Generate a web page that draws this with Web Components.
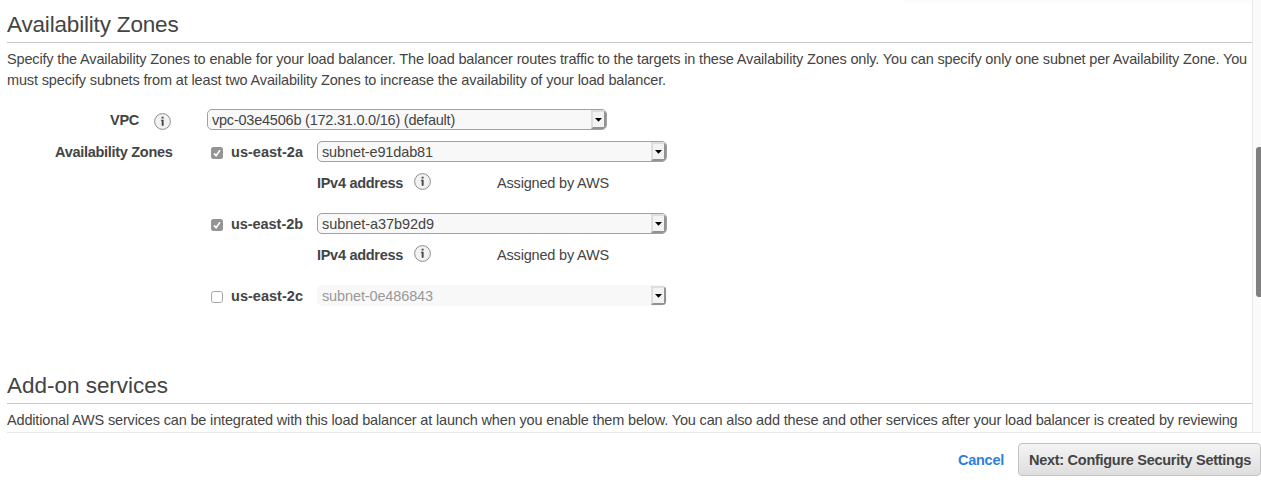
<!DOCTYPE html>
<html lang="en">
<head>
<meta charset="utf-8">
<title>Configure Load Balancer</title>
<style>
html,body{margin:0;height:100%;overflow:hidden;background:#fff}
body{font:14.5px/21px "Liberation Sans",Arial,sans-serif;color:#444}
</style>
</head>
<body>
<wizard-page></wizard-page>
<script>
function define(name, html, setup) {
  customElements.define(name, class extends HTMLElement {
    connectedCallback() {
      if (this.shadowRoot) return;
      const t = document.createElement('template');
      t.innerHTML = html;
      this.attachShadow({ mode: 'open' }).appendChild(t.content.cloneNode(true));
      if (setup) setup(this);
    }
  });
}

// One line of text tracked to an exact measure given by its w attribute.
define('fit-text', `<style>:host{display:block;white-space:nowrap;width:max-content;flex:none}</style><slot></slot>`, el => {
  const natural = el.getBoundingClientRect().width;
  el.style.letterSpacing = ((+el.getAttribute('w') - natural) / el.textContent.length).toFixed(4) + 'px';
});

define('info-icon', `<style>:host{display:block;width:17px;height:17px;flex:none}svg{display:block}</style>
<svg width="17" height="17" viewBox="0 0 17 17"><circle cx="8.5" cy="8.5" r="7.9" fill="#f2f2f2" stroke="#8c8c8c"/>
<path d="M7.6 3.8h2v1.8h-2zM6.9 6.8h2.7v6H7.7V7.7h-.8z" fill="#444"/></svg>`);

define('check-box', `<style>:host{display:block;width:12px;height:12px;flex:none}svg{display:block}
.on{display:none}:host([checked]) .on{display:block}:host([checked]) .off{display:none}</style>
<svg class="on" width="12" height="12" viewBox="0 0 12 12"><rect width="12" height="12" rx="2.5" fill="#949496"/><path d="M3 6.4 5.1 8.8 9 3.2" fill="none" stroke="#fff" stroke-width="1.6"/></svg>
<svg class="off" width="12" height="12" viewBox="0 0 12 12"><rect x=".5" y=".5" width="11" height="11" rx="2.2" fill="#fff" stroke="#a4a4a4"/></svg>`);

define('select-box', `<style>
:host{box-sizing:border-box;display:flex;justify-content:space-between;width:350px;height:21px;flex:none;border:1px solid #a0a0a0;border-radius:5px;background:#f8f8f8;padding-left:4px;overflow:hidden}
:host([wide]){width:400px}
:host([disabled]){border-color:#f8f8f8;color:#999}
.t{line-height:21px}
.b{box-sizing:border-box;width:15px;height:19px;border:2px solid;border-color:#dedede #929292 #929292 #dedede;background:#f3f3f3}
svg{display:block}
</style><div class="t"><slot></slot></div><div class="b"><svg width="11" height="15" viewBox="0 0 11 15"><path d="M2 6h7L5.5 9.7z" fill="#000"/></svg></div>`);

define('section-title', `<style>:host{display:block;height:32px;border-bottom:1px solid #c8c8c8;font-size:22.5px;line-height:30px}</style><slot></slot>`);

define('zone-row', `<style>
:host{display:grid;grid-template-columns:204px 20px 86px 1fr;height:21px;align-items:start}
check-box{margin-top:6px}
.n{font-weight:bold;line-height:23px}
</style><slot name="label"></slot><slot name="check"></slot><div class="n"><slot name="name"></slot></div><slot name="field"></slot>`);

define('address-row', `<style>
:host{display:grid;grid-template-columns:97px 83px auto;padding-left:310px;height:21px;line-height:23px;margin:10px 0 20px}
b{display:block}info-icon{margin-top:1px}
</style><b><fit-text w="86">IPv4 address</fit-text></b><info-icon></info-icon><fit-text w="112">Assigned by AWS</fit-text>`);

define('availability-zones', `<style>
:host{display:block}
.intro{margin-top:6px}
.vpc{display:flex;height:21px;margin:18px 0 11px;font-weight:bold;line-height:23px}
.vpc fit-text{margin-left:103px}.vpc info-icon{margin:4px 37px 0 14px}
select-box{font-weight:normal}
.vpc select-box fit-text{margin:0}
.lab{margin-left:48px;font-weight:bold;line-height:23px}
check-box{margin-top:6px}
</style>
<section-title><fit-text w="171.5">Availability Zones</fit-text></section-title>
<div class="intro"><fit-text w="1240">Specify the Availability Zones to enable for your load balancer. The load balancer routes traffic to the targets in these Availability Zones only. You can specify only one subnet per Availability Zone. You</fit-text>
<fit-text w="659">must specify subnets from at least two Availability Zones to increase the availability of your load balancer.</fit-text></div>
<div class="vpc"><fit-text w="29">VPC</fit-text><info-icon style="margin-left:15px;margin-right:36px"></info-icon><select-box wide><fit-text w="243">vpc-03e4506b (172.31.0.0/16) (default)</fit-text></select-box></div>
<zone-row><fit-text class="lab" slot="label" w="117.5">Availability Zones</fit-text><check-box slot="check" checked></check-box><fit-text slot="name" w="72">us-east-2a</fit-text><select-box slot="field"><fit-text w="111">subnet-e91dab81</fit-text></select-box></zone-row>
<address-row></address-row>
<zone-row><span slot="label"></span><check-box slot="check" checked></check-box><fit-text slot="name" w="72">us-east-2b</fit-text><select-box slot="field"><fit-text w="112">subnet-a37b92d9</fit-text></select-box></zone-row>
<address-row></address-row>
<zone-row><span slot="label"></span><check-box slot="check"></check-box><fit-text slot="name" w="72">us-east-2c</fit-text><select-box slot="field" disabled><fit-text w="111">subnet-0e486843</fit-text></select-box></zone-row>`);

define('addon-services', `<style>:host{display:block;margin-top:65px}.p{margin-top:6px}</style>
<section-title><fit-text w="161">Add-on services</fit-text></section-title>
<div class="p"><fit-text w="1230.5">Additional AWS services can be integrated with this load balancer at launch when you enable them below. You can also add these and other services after your load balancer is created by reviewing</fit-text></div>`);

define('scroll-track', `<style>
:host{display:block;box-sizing:border-box;width:9px;height:432px;border-left:1px solid #e7e7e7;background:#fafafa;padding:147px 0 0 3px}
div{height:150px;background:#7f7f7f;border-radius:3px 0 0 3px}</style><div></div>`);

define('wizard-footer', `<style>
:host{display:flex;justify-content:flex-end;border-top:1px solid #e9e9e9;margin-left:7px;height:54px;font-weight:bold}
a{color:#2f7fde;margin:17px 14px 0 0}
button{box-sizing:border-box;width:243px;height:33px;margin:10px 0 0;padding:1px 0 0 10px;border:1px solid #c3c3c3;border-radius:4px;background:linear-gradient(#f4f4f4,#dedede);color:#444;font:inherit;text-align:left;display:flex;align-items:center}
</style><a><fit-text w="46">Cancel</fit-text></a><button><fit-text w="222">Next: Configure Security Settings</fit-text></button>`);

define('wizard-page', `<style>
:host{display:block;height:487px;overflow:hidden}
.body{display:flex;height:432px;overflow:hidden}
main{box-sizing:border-box;width:1252px;padding:10px 0 0 7px;flex:none;background:linear-gradient(#fafafa,#fff) 904px 0/348px 4px no-repeat}
</style><div class="body"><main><availability-zones></availability-zones><addon-services></addon-services></main><scroll-track></scroll-track></div><wizard-footer></wizard-footer>`);
</script>
</body>
</html>
